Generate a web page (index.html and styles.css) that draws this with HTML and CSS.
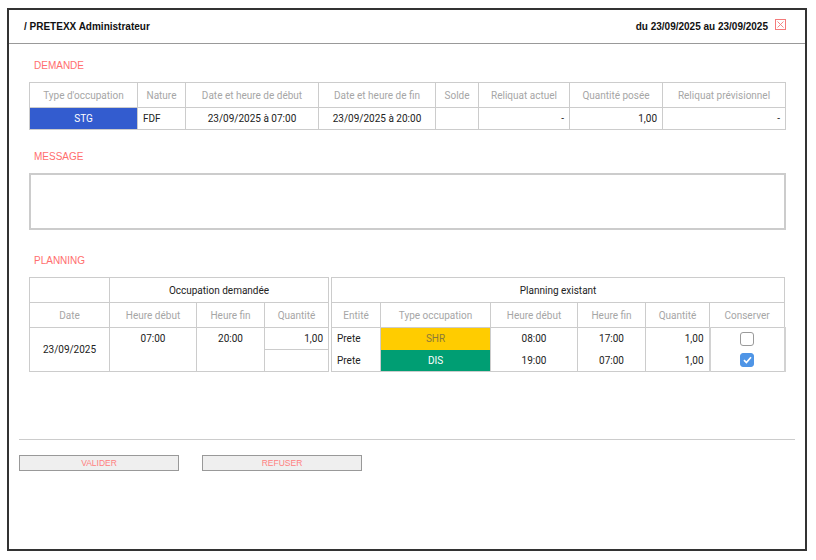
FILE: index.html
```html
<!DOCTYPE html>
<html lang="fr">
<head>
<meta charset="utf-8">
<title>PRETEXX</title>
<link rel="stylesheet" href="styles.css">
</head>
<body>
<div class="frame">
  <header class="topbar">
    <div class="title">/ PRETEXX Administrateur</div>
    <div class="period">
      <span>du 23/09/2025 au 23/09/2025</span>
      <svg class="close" width="11" height="11" viewBox="0 0 11 11"><rect x="0.5" y="0.5" width="10" height="10" fill="none" stroke="#f47a7a" stroke-width="1"/><path d="M2.5 2.5 L8.5 8.5 M8.5 2.5 L2.5 8.5" stroke="#f47a7a" stroke-width="0.9"/></svg>
    </div>
  </header>

  <main class="content">
    <div class="label label-demande">DEMANDE</div>
    <table class="grid demande">
      <colgroup>
        <col style="width:108px"><col style="width:48px"><col style="width:133px"><col style="width:117px"><col style="width:43px"><col style="width:91px"><col style="width:93px"><col style="width:123px">
      </colgroup>
      <thead>
        <tr class="hrow">
          <th>Type d'occupation</th><th>Nature</th><th>Date et heure de début</th><th>Date et heure de fin</th><th>Solde</th><th>Reliquat actuel</th><th>Quantité posée</th><th>Reliquat prévisionnel</th>
        </tr>
      </thead>
      <tbody>
        <tr class="drow">
          <td class="c stg">STG</td><td class="l">FDF</td><td class="c">23/09/2025 à 07:00</td><td class="c">23/09/2025 à 20:00</td><td></td><td class="r">-</td><td class="r">1,00</td><td class="r">-</td>
        </tr>
      </tbody>
    </table>

    <div class="label label-message">MESSAGE</div>
    <div class="message"></div>

    <div class="label label-planning">PLANNING</div>
    <div class="planning">
      <table class="grid occ">
        <colgroup>
          <col style="width:80px"><col style="width:87px"><col style="width:68px"><col style="width:64px">
        </colgroup>
        <tr class="hrow group">
          <th></th><th colspan="3" class="dark">Occupation demandée</th>
        </tr>
        <tr class="hrow">
          <th>Date</th><th>Heure début</th><th>Heure fin</th><th>Quantité</th>
        </tr>
        <tr class="prow">
          <td rowspan="2" class="c">23/09/2025</td><td rowspan="2" class="c top">07:00</td><td rowspan="2" class="c top">20:00</td><td class="r">1,00</td>
        </tr>
        <tr class="prow">
          <td></td>
        </tr>
      </table>
      <table class="grid exist">
        <colgroup>
          <col style="width:49px"><col style="width:110px"><col style="width:87px"><col style="width:68px"><col style="width:64px"><col style="width:75px">
        </colgroup>
        <tr class="hrow group">
          <th colspan="6" class="dark">Planning existant</th>
        </tr>
        <tr class="hrow">
          <th>Entité</th><th>Type occupation</th><th>Heure début</th><th>Heure fin</th><th>Quantité</th><th>Conserver</th>
        </tr>
        <tr class="prow first">
          <td class="l">Prete</td><td class="c shr">SHR</td><td class="c">08:00</td><td class="c">17:00</td><td class="r">1,00</td><td class="c keep keep-top"><span class="cb"></span></td>
        </tr>
        <tr class="prow second">
          <td class="l">Prete</td><td class="c dis">DIS</td><td class="c">19:00</td><td class="c">07:00</td><td class="r">1,00</td><td class="c keep keep-bottom"><span class="cb checked"><svg width="9" height="8" viewBox="0 0 9 8"><path d="M1 4.2 L3.4 6.5 L8 1.3" fill="none" stroke="#fff" stroke-width="1.7"/></svg></span></td>
        </tr>
      </table>
    </div>
  </main>

  <footer class="actions">
    <button class="btn">VALIDER</button>
    <button class="btn">REFUSER</button>
  </footer>
</div>
</body>
</html>
```

FILE: styles.css
```css
* { box-sizing: border-box; }
html, body { margin: 0; padding: 0; background: #fff; }
body { font-family: Roboto, "Liberation Sans", Arial, sans-serif; color: #222; }

.frame {
  margin: 8px 0 0 7px;
  width: 800px;
  height: 543px;
  border: 2px solid #333;
  background: #fff;
}

.topbar {
  height: 34px;
  border-bottom: 1px solid #999;
  display: flex;
  align-items: center;
  justify-content: space-between;
  padding: 0 19px 1px 15px;
  font-family: "Liberation Sans", Arial, sans-serif;
  font-weight: bold;
  font-size: 10px;
  color: #111;
}
.period { display: flex; align-items: center; gap: 7px; }
.close { display: block; margin-top: -4px; }

.content { padding: 0 20px; }

.label {
  font-family: "Liberation Sans", Arial, sans-serif;
  font-size: 10px;
  color: #ff6e6e;
  padding-left: 5px;
  line-height: 12px;
}
.label-demande { margin-top: 16px; margin-bottom: 10px; }
.label-message { margin-top: 21px; margin-bottom: 10px; }
.label-planning { margin-top: 25px; margin-bottom: 10px; }

.grid {
  border-collapse: collapse;
  table-layout: fixed;
  font-size: 10px;
}
.grid th, .grid td {
  border: 1px solid #ccc;
  padding: 0 5px;
  white-space: nowrap;
  overflow: hidden;
}
.grid th { font-weight: normal; color: #a6a6a6; }
.grid th.dark { color: #222; }

.demande { width: 756px; }
.hrow { height: 25px; }
.drow { height: 22px; }
.c { text-align: center; }
.l { text-align: left; }
.r { text-align: right; }
.stg { background: #335ccf; color: #fff; }

.message {
  width: 757px;
  height: 57px;
  border: 2px solid #ccc;
}

.planning { display: flex; gap: 2px; align-items: flex-start; }
.occ { width: 300px; }
.exist { width: 454px; }
.prow { height: 22px; }
.grid td.top { vertical-align: top; padding-top: 5px; }
.exist .prow td { border-top: none; border-bottom: none; }
.exist .prow.second td { border-bottom: 1px solid #ccc; }
.exist .prow.first td { border-top: 1px solid #ccc; }
.shr { background: #ffcc00; color: #8b7a3a; }
.dis { background: #009e73; color: #fff; }
.grid td.keep { border-left: 2px solid #d2d2d2; border-right: 2px solid #d2d2d2; }
.grid td.keep-top { border-top: 2px solid #d2d2d2; }
.grid td.keep-bottom { border-bottom: 2px solid #d2d2d2; }

.cb {
  display: inline-flex;
  align-items: center;
  justify-content: center;
  width: 14px;
  height: 14px;
  border: 1px solid #9a9a9a;
  border-radius: 3px;
  background: #fff;
  vertical-align: middle;
}
.cb.checked { background: #4f95e6; border-color: #4f95e6; }
.cb svg { display: block; }

.actions {
  margin: 67px 10px 0 10px;
  border-top: 1px solid #ccc;
  padding-top: 15px;
  display: flex;
  gap: 23px;
}
.btn {
  width: 160px;
  height: 16px;
  margin: 0;
  padding: 0;
  border: 1px solid #999;
  background: #efefef;
  color: #ff8080;
  font-family: "Liberation Sans", Arial, sans-serif;
  font-size: 8.5px;
  line-height: 14px;
}
```
